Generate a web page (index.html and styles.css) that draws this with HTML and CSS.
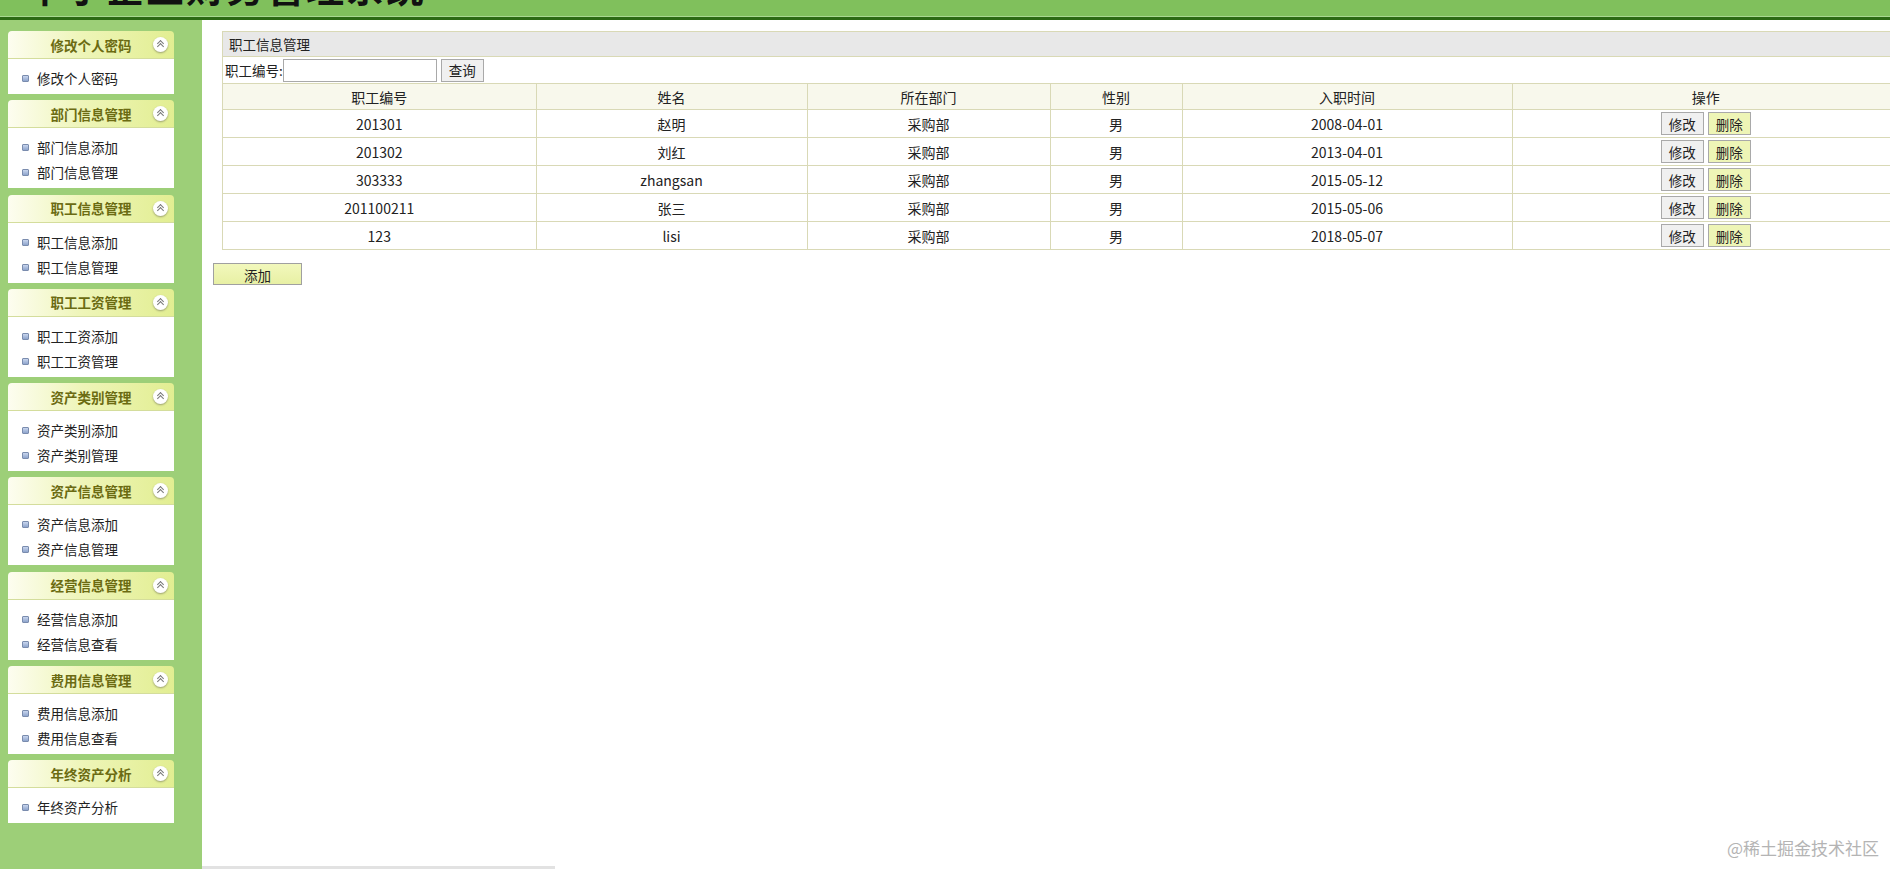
FILE: index.html
```html
<!DOCTYPE html>
<html lang="zh-CN">

<head>
    <meta charset="UTF-8">
    <title>职工信息管理</title>
    <link rel="stylesheet" href="styles.css">
</head>

<body>
    <div class="top">
        <h1>中小企业财务管理系统</h1>
    </div>
    <div class="wrap">
        <div class="side">
            <div class="menu">
                <div class="menu-hd"><span></span><b>修改个人密码</b><i class="fold"></i></div>
                <ul class="menu-bd">
                    <li>修改个人密码</li>
                </ul>
            </div>
            <div class="menu">
                <div class="menu-hd"><span></span><b>部门信息管理</b><i class="fold"></i></div>
                <ul class="menu-bd">
                    <li>部门信息添加</li>
                    <li>部门信息管理</li>
                </ul>
            </div>
            <div class="menu">
                <div class="menu-hd"><span></span><b>职工信息管理</b><i class="fold"></i></div>
                <ul class="menu-bd">
                    <li>职工信息添加</li>
                    <li>职工信息管理</li>
                </ul>
            </div>
            <div class="menu">
                <div class="menu-hd"><span></span><b>职工工资管理</b><i class="fold"></i></div>
                <ul class="menu-bd">
                    <li>职工工资添加</li>
                    <li>职工工资管理</li>
                </ul>
            </div>
            <div class="menu">
                <div class="menu-hd"><span></span><b>资产类别管理</b><i class="fold"></i></div>
                <ul class="menu-bd">
                    <li>资产类别添加</li>
                    <li>资产类别管理</li>
                </ul>
            </div>
            <div class="menu">
                <div class="menu-hd"><span></span><b>资产信息管理</b><i class="fold"></i></div>
                <ul class="menu-bd">
                    <li>资产信息添加</li>
                    <li>资产信息管理</li>
                </ul>
            </div>
            <div class="menu">
                <div class="menu-hd"><span></span><b>经营信息管理</b><i class="fold"></i></div>
                <ul class="menu-bd">
                    <li>经营信息添加</li>
                    <li>经营信息查看</li>
                </ul>
            </div>
            <div class="menu">
                <div class="menu-hd"><span></span><b>费用信息管理</b><i class="fold"></i></div>
                <ul class="menu-bd">
                    <li>费用信息添加</li>
                    <li>费用信息查看</li>
                </ul>
            </div>
            <div class="menu">
                <div class="menu-hd"><span></span><b>年终资产分析</b><i class="fold"></i></div>
                <ul class="menu-bd">
                    <li>年终资产分析</li>
                </ul>
            </div>
        </div>

        <div class="main">
            <div class="panel">
                <div class="panel-title">职工信息管理</div>
                <div class="search">
                    职工编号:<input type="text" class="search-input"><button class="btn">查询</button>
                </div>
                <table class="list">
                    <colgroup>
                        <col style="width:313px">
                        <col style="width:271px">
                        <col style="width:243px">
                        <col style="width:132px">
                        <col style="width:330px">
                        <col>
                    </colgroup>
                    <tr>
                        <th>职工编号</th>
                        <th>姓名</th>
                        <th>所在部门</th>
                        <th>性别</th>
                        <th>入职时间</th>
                        <th>操作</th>
                    </tr>
                    <tr>
                        <td>201301</td>
                        <td>赵明</td>
                        <td>采购部</td>
                        <td>男</td>
                        <td>2008-04-01</td>
                        <td><button class="btn">修改</button><button class="btn btn-del">删除</button></td>
                    </tr>
                    <tr>
                        <td>201302</td>
                        <td>刘红</td>
                        <td>采购部</td>
                        <td>男</td>
                        <td>2013-04-01</td>
                        <td><button class="btn">修改</button><button class="btn btn-del">删除</button></td>
                    </tr>
                    <tr>
                        <td>303333</td>
                        <td>zhangsan</td>
                        <td>采购部</td>
                        <td>男</td>
                        <td>2015-05-12</td>
                        <td><button class="btn">修改</button><button class="btn btn-del">删除</button></td>
                    </tr>
                    <tr>
                        <td>201100211</td>
                        <td>张三</td>
                        <td>采购部</td>
                        <td>男</td>
                        <td>2015-05-06</td>
                        <td><button class="btn">修改</button><button class="btn btn-del">删除</button></td>
                    </tr>
                    <tr>
                        <td>123</td>
                        <td>lisi</td>
                        <td>采购部</td>
                        <td>男</td>
                        <td>2018-05-07</td>
                        <td><button class="btn">修改</button><button class="btn btn-del">删除</button></td>
                    </tr>
                </table>
            </div>
            <button class="btn-add">添加</button>
            <div class="hscroll"></div>
        </div>
    </div>
    <div class="mark">@稀土掘金技术社区</div>
</body>

</html>
```

FILE: styles.css
```css
html,
body {
    margin: 0;
    height: 100%;
    overflow: hidden;
}

body {
    font-family: "Microsoft YaHei", "Noto Sans CJK SC", sans-serif;
    font-size: 14px;
    color: #222;
}

/* 顶部 */
.top {
    height: 16px;
    background: #80c05c;
    border-bottom: 1px solid #a8d890;
    box-shadow: 0 3px 0 #2c6a14;
    margin-bottom: 3px;
    overflow: hidden;
    padding-left: 26px;
}

.top h1 {
    margin: -34px 0 0;
    font-size: 38px;
    line-height: 40px;
    letter-spacing: 2px;
    color: #111;
}

.wrap {
    display: flex;
    height: calc(100% - 20px);
}

/* 左侧菜单 */
.side {
    width: 202px;
    flex: none;
    background: #9dcf78;
    padding: 11px 0 0 8px;
    box-sizing: border-box;
}

.menu {
    width: 166px;
    margin-bottom: 6.3px;
}

.menu-hd {
    height: 27px;
    display: grid;
    grid-template-columns: 28px 1fr 28px;
    align-items: center;
    border-radius: 4px 4px 0 0;
    background: linear-gradient(to right, #fdfdf0 0%, #eef5b8 45%, #e2ee92 100%);
    border-bottom: 1px solid #d4dd9c;
}

.menu-hd b {
    text-align: center;
    font-size: 13.5px;
    color: #6b6b12;
}

.fold {
    justify-self: center;
    width: 15px;
    height: 15px;
    border-radius: 50%;
    background: #fff;
    box-shadow: 0 1px 2px #9aa070;
    position: relative;
}

.fold::before,
.fold::after {
    content: "";
    position: absolute;
    left: 5px;
    width: 4px;
    height: 4px;
    border-left: 1px solid #777;
    border-top: 1px solid #777;
    transform: rotate(45deg);
}

.fold::before {
    top: 4px;
}

.fold::after {
    top: 7px;
}

.menu-bd {
    list-style: none;
    margin: 0;
    padding: 7px 0 3px 14px;
    background: #fff;
}

.menu-bd li {
    line-height: 25px;
    font-size: 13.5px;
    display: flex;
    align-items: center;
}

.menu-bd li::before {
    content: "";
    width: 5px;
    height: 5px;
    margin-right: 8px;
    border: 1px solid #7a8cae;
    border-radius: 1px;
    background: linear-gradient(#c9d6ee, #8ea4cc);
}

/* 右侧内容 */
.main {
    flex: 1;
    display: flex;
    flex-direction: column;
    align-items: flex-start;
    padding: 11px 0 0 11px;
    overflow: hidden;
}

.panel {
    width: 1677px;
    flex: none;
    margin-left: 9px;
    border: 1px solid #d9d9b6;
    border-bottom: 0;
}

.panel-title {
    height: 24px;
    line-height: 24px;
    padding-left: 6px;
    font-size: 13.5px;
    background: #e8e8e8;
    border-bottom: 1px solid #d9d9b6;
}

.search {
    height: 26px;
    display: flex;
    align-items: center;
    padding-left: 2px;
    font-size: 13.5px;
}

.search-input {
    width: 154px;
    height: 23px;
    box-sizing: border-box;
    margin: 0 2px 0 0;
    border: 1px solid #a9a9a9;
}

.btn {
    height: 23px;
    padding: 0 7px;
    font-family: inherit;
    font-size: 13.5px;
    color: #222;
    background: #f0f0f0;
    border: 1px solid #a9a9a9;
    margin: 0 2px;
}

.btn-del {
    background: #eef5b6;
}

.list {
    width: 100%;
    border-collapse: collapse;
    table-layout: fixed;
}

.list th,
.list td {
    border: 1px solid #d9d9b6;
    text-align: center;
    padding: 0;
}

.list th:first-child,
.list td:first-child {
    border-left: 0;
}

.list th {
    height: 25px;
    font-weight: normal;
    background: #f8f8ec;
}

.list td {
    height: 27px;
}

.btn-add {
    margin-top: 13px;
    width: 89px;
    height: 22px;
    font-family: inherit;
    font-size: 13.5px;
    color: #222;
    background: linear-gradient(#f2f8bc, #e8f0a4);
    border: 1px solid #a0a0a0;
}

.hscroll {
    margin-top: auto;
    margin-left: -11px;
    width: 353px;
    height: 3px;
    background: #e2e2e2;
}

.mark {
    position: absolute;
    right: 11px;
    bottom: 9px;
    font-size: 17px;
    color: #b4b4b4;
}
```
